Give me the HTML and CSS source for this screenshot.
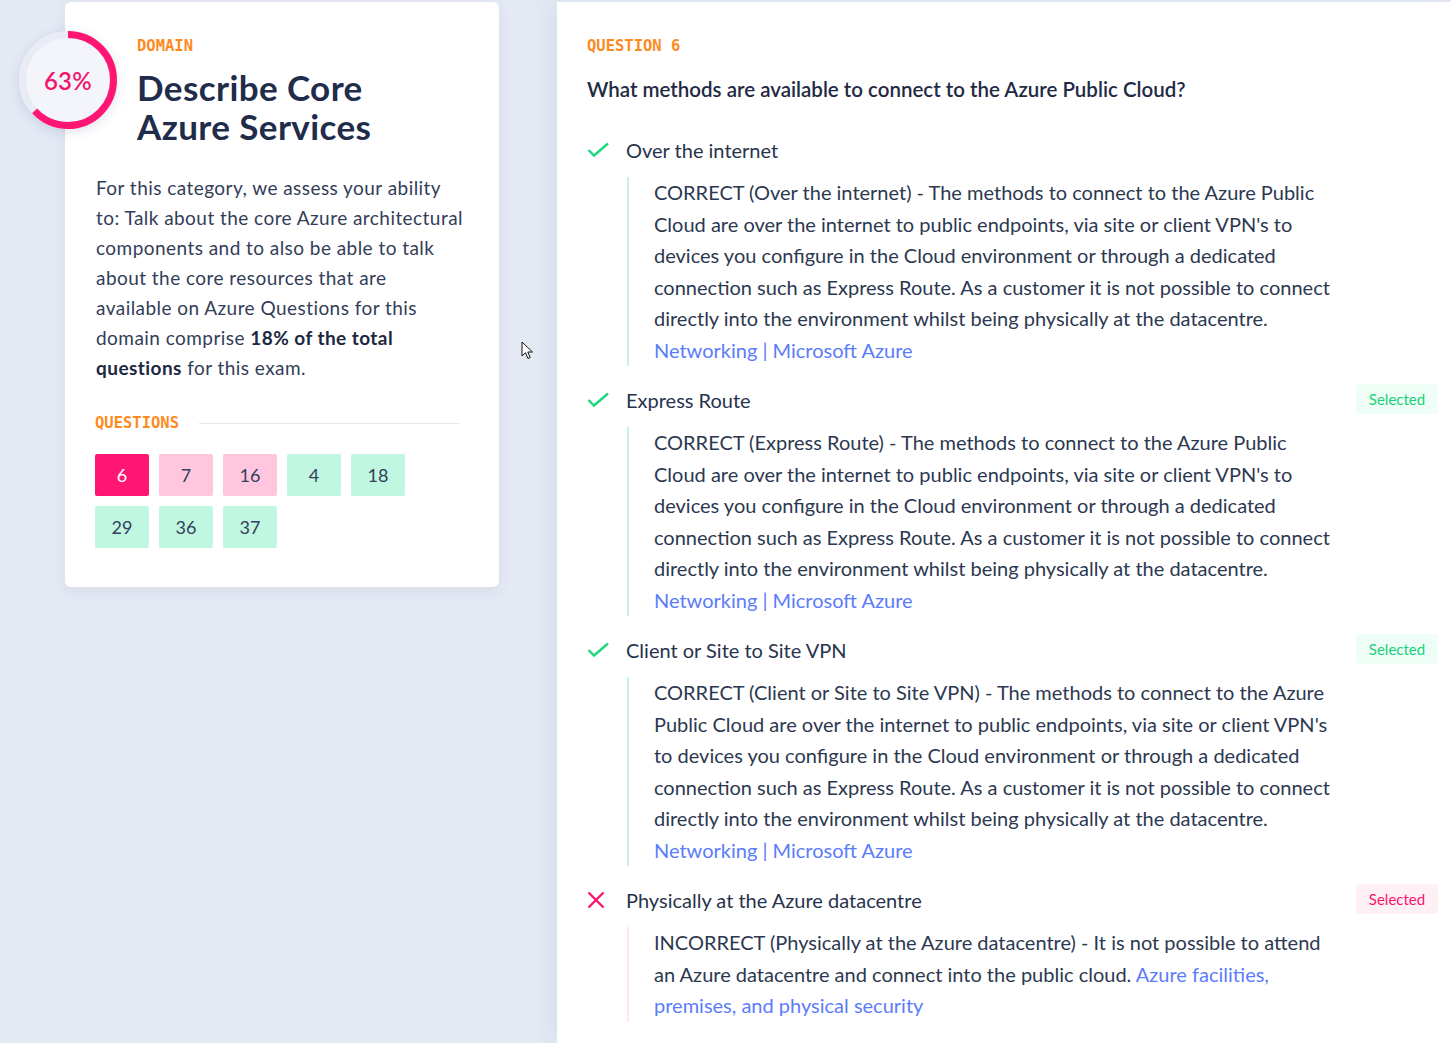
FILE: index.html
```html
<!DOCTYPE html>
<html lang="en">
<head>
<meta charset="utf-8">
<title>Describe Core Azure Services</title>
<link rel="stylesheet" href="styles.css">
</head>
<body>
<div class="page">
  <aside class="sidebar">
    <section class="domain-card">
      <div class="score">
        <svg width="98" height="98" viewBox="0 0 98 98">
          <circle cx="49" cy="49" r="45.5" fill="#f3f5fa" stroke="#e9ecf4" stroke-width="7"/>
          <circle cx="49" cy="49" r="45.5" fill="none" stroke="#ff1673" stroke-width="7" stroke-dasharray="180.1 400" transform="rotate(-90 49 49)"/>
        </svg>
        <span class="score-value">63%</span>
      </div>
      <div class="domain-head">
        <div class="eyebrow">DOMAIN</div>
        <h1 class="domain-title">Describe Core Azure Services</h1>
      </div>
      <p class="domain-desc">For this category, we assess your ability to: Talk about the core Azure architectural components and to also be able to talk about the core resources that are available on Azure Questions for this domain comprise <strong>18% of the total questions</strong> for this exam.</p>
      <div class="questions-head">
        <span class="eyebrow">QUESTIONS</span>
        <span class="rule"></span>
      </div>
      <div class="q-grid">
        <span class="q-box current">6</span>
        <span class="q-box wrong">7</span>
        <span class="q-box wrong">16</span>
        <span class="q-box right">4</span>
        <span class="q-box right">18</span>
        <span class="q-box right">29</span>
        <span class="q-box right">36</span>
        <span class="q-box right">37</span>
      </div>
    </section>
  </aside>

  <main class="question-panel">
    <div class="eyebrow">QUESTION 6</div>
    <h2 class="question-text">What methods are available to connect to the Azure Public Cloud?</h2>

    <div class="options">
      <div class="option">
        <div class="opt-icon">
          <svg width="22" height="16" viewBox="0 0 22 16"><polyline points="1.5,8 7,13.5 21,1.5" fill="none" stroke="#1fd67f" stroke-width="2.4"/></svg>
        </div>
        <div class="opt-body">
          <div class="opt-label">Over the internet</div>
          <div class="opt-expl ok">
            <p>CORRECT (Over the internet) - The methods to connect to the Azure Public Cloud are over the internet to public endpoints, via site or client VPN's to devices you configure in the Cloud environment or through a dedicated connection such as Express Route. As a customer it is not possible to connect directly into the environment whilst being physically at the datacentre.</p>
            <a class="ref" href="#">Networking | Microsoft Azure</a>
          </div>
        </div>
        <div class="opt-badge"></div>
      </div>

      <div class="option">
        <div class="opt-icon">
          <svg width="22" height="16" viewBox="0 0 22 16"><polyline points="1.5,8 7,13.5 21,1.5" fill="none" stroke="#1fd67f" stroke-width="2.4"/></svg>
        </div>
        <div class="opt-body">
          <div class="opt-label">Express Route</div>
          <div class="opt-expl ok">
            <p>CORRECT (Express Route) - The methods to connect to the Azure Public Cloud are over the internet to public endpoints, via site or client VPN's to devices you configure in the Cloud environment or through a dedicated connection such as Express Route. As a customer it is not possible to connect directly into the environment whilst being physically at the datacentre.</p>
            <a class="ref" href="#">Networking | Microsoft Azure</a>
          </div>
        </div>
        <div class="opt-badge"><span class="badge ok">Selected</span></div>
      </div>

      <div class="option">
        <div class="opt-icon">
          <svg width="22" height="16" viewBox="0 0 22 16"><polyline points="1.5,8 7,13.5 21,1.5" fill="none" stroke="#1fd67f" stroke-width="2.4"/></svg>
        </div>
        <div class="opt-body">
          <div class="opt-label">Client or Site to Site VPN</div>
          <div class="opt-expl ok">
            <p>CORRECT (Client or Site to Site VPN) - The methods to connect to the Azure Public Cloud are over the internet to public endpoints, via site or client VPN's to devices you configure in the Cloud environment or through a dedicated connection such as Express Route. As a customer it is not possible to connect directly into the environment whilst being physically at the datacentre.</p>
            <a class="ref" href="#">Networking | Microsoft Azure</a>
          </div>
        </div>
        <div class="opt-badge"><span class="badge ok">Selected</span></div>
      </div>

      <div class="option">
        <div class="opt-icon">
          <svg width="18" height="18" viewBox="0 0 18 18"><path d="M1.5 1.5 L16.5 16.5 M16.5 1.5 L1.5 16.5" fill="none" stroke="#ff1673" stroke-width="2.4"/></svg>
        </div>
        <div class="opt-body">
          <div class="opt-label">Physically at the Azure datacentre</div>
          <div class="opt-expl bad">
            <p>INCORRECT (Physically at the Azure datacentre) - It is not possible to attend an Azure datacentre and connect into the public cloud. <a class="ref" href="#">Azure facilities, premises, and physical security</a></p>
          </div>
        </div>
        <div class="opt-badge"><span class="badge bad">Selected</span></div>
      </div>
    </div>
  </main>
</div>
<svg class="cursor" width="13" height="20" viewBox="0 0 13 20"><path d="M1 1 L1 15 L4.5 11.8 L7 17.5 L9.2 16.5 L6.8 11 L11.5 11 Z" fill="#fff" stroke="#111" stroke-width="1" stroke-linejoin="round"/></svg>
</body>
</html>
```

FILE: styles.css
```css
* { box-sizing: border-box; }

body {
  margin: 0;
  background: #e4e9f4;
  font-family: Lato, "Open Sans", sans-serif;
  color: #2c3850;
}

.page {
  display: flex;
  align-items: flex-start;
  padding-top: 2px;
  min-height: 1043px;
}

.sidebar {
  width: 557px;
  flex: none;
}

.domain-card {
  position: relative;
  margin-left: 65px;
  width: 434px;
  background: #fff;
  border-radius: 6px;
  box-shadow: 0 4px 14px rgba(60, 80, 130, 0.08);
  padding: 34px 33px 39px 31px;
}

.score {
  position: absolute;
  left: -46px;
  top: 29px;
  width: 98px;
  height: 98px;
  border-radius: 50%;
  box-shadow: 0 3px 12px rgba(60, 80, 130, 0.16);
  display: flex;
  align-items: center;
  justify-content: center;
}

.score svg {
  position: absolute;
  left: 0;
  top: 0;
}

.score-value {
  position: relative;
  font-size: 24px;
  font-weight: 600;
  color: #f2156f;
  letter-spacing: 0.3px;
}

.domain-head {
  padding-left: 41px;
}

.eyebrow {
  font-family: "DejaVu Sans Mono", monospace;
  font-weight: 700;
  font-size: 15.5px;
  line-height: 20px;
  color: #fd8a1e;
}

.domain-title {
  margin: 12px 0 0;
  max-width: 290px;
  font-size: 35px;
  line-height: 39px;
  letter-spacing: 0.4px;
  font-weight: 700;
  color: #1f2c4a;
}

.domain-desc {
  margin: 27px 0 0;
  font-size: 19px;
  line-height: 30px;
  letter-spacing: 0.45px;
  color: #323d58;
}

.domain-desc strong {
  color: #1c2742;
}

.questions-head {
  margin: 30px 0 0 -1px;
  display: flex;
  align-items: center;
  gap: 20px;
  padding-right: 7px;
}

.rule {
  flex: 1;
  height: 1px;
  background: #e6e8ef;
}

.q-grid {
  margin: 21px 0 0 -1px;
  display: flex;
  flex-wrap: wrap;
  gap: 10px;
  width: 320px;
}

.q-box {
  width: 54px;
  height: 42px;
  border-radius: 2px;
  display: flex;
  align-items: center;
  justify-content: center;
  font-size: 18px;
  color: #34405f;
}

.q-box.current { background: #ff1673; color: #fff; }
.q-box.wrong { background: #ffc6de; }
.q-box.right { background: #c0f7e0; }

.question-panel {
  flex: 1;
  align-self: stretch;
  background: #fff;
  padding: 34px 13px 0 30px;
  box-shadow: -8px 0 18px rgba(60, 80, 130, 0.06);
}

.question-text {
  margin: 19px 0 0;
  font-size: 20.5px;
  line-height: 28px;
  font-weight: 600;
  color: #1f2a44;
}

.options {
  margin-top: 33px;
}

.option {
  display: grid;
  grid-template-columns: 39px 712px 100px;
  margin-bottom: 20px;
}

.opt-icon {
  height: 28px;
  display: flex;
  align-items: center;
}

.opt-label {
  font-size: 20px;
  line-height: 28px;
  color: #27334d;
}

.opt-expl {
  margin-top: 13px;
  margin-left: 1px;
  border-left: 2px solid #c6f5df;
  padding-left: 25px;
  font-size: 20px;
  line-height: 31.5px;
  color: #2c3850;
}

.opt-expl.bad {
  border-left-color: #ffe6ef;
}

.opt-expl p {
  margin: 0;
}

.ref {
  color: #5b7cfa;
  text-decoration: none;
}

.opt-badge {
  display: flex;
  justify-content: flex-end;
  align-items: flex-start;
}

.badge {
  margin-top: -2px;
  width: 82px;
  height: 30px;
  border-radius: 4px;
  display: flex;
  align-items: center;
  justify-content: center;
  font-size: 15px;
}

.badge.ok { background: #effdf7; color: #18d27a; }
.badge.bad { background: #fff0f5; color: #f7156f; }

.cursor {
  position: absolute;
  left: 521px;
  top: 341px;
}
```
